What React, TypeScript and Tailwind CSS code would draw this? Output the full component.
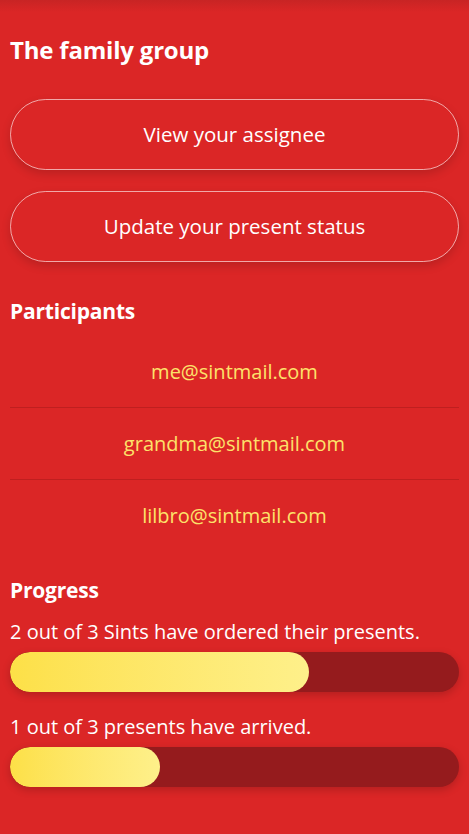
import React from "react";

const font = { fontFamily: '"Open Sans", "Noto Sans", sans-serif' };

function Bar({ pct }: { pct: number }) {
  return (
    <div className="h-10 w-full rounded-full bg-[#951b1d] shadow-[0_3px_8px_rgba(0,0,0,0.18)] overflow-hidden">
      <div
        className="h-full rounded-full bg-gradient-to-r from-[#fde047] to-[#fef08a]"
        style={{ width: `${pct}%` }}
      />
    </div>
  );
}

export default function App() {
  const emails = ["me@sintmail.com", "grandma@sintmail.com", "lilbro@sintmail.com"];
  return (
    <div
      className="min-h-[834px] w-full bg-[#db2626] text-white px-[10px] relative"
      style={font}
    >
      <div className="absolute left-0 right-0 top-0 h-3 bg-gradient-to-b from-[#c82424] to-[#db2626]" />
      <div className="relative">
        <h1 className="pt-[34px] text-[24px] font-bold leading-8 tracking-[-0.2px]">The family group</h1>
        <div className="mt-[33px] flex flex-col gap-[21px]">
          <button className="h-[71px] w-full rounded-full border border-white/60 text-[20.5px] shadow-[0_4px_10px_rgba(0,0,0,0.15)]">
            View your assignee
          </button>
          <button className="h-[71px] w-full rounded-full border border-white/60 text-[20.5px] shadow-[0_4px_10px_rgba(0,0,0,0.15)]">
            Update your present status
          </button>
        </div>
        <h2 className="mt-[35px] text-[21px] font-bold leading-7 tracking-[-0.2px]">Participants</h2>
        <div className="mt-[11px]">
          {emails.map((e, i) => (
            <div
              key={e}
              className={`h-[72px] flex items-center justify-center text-[20px] text-[#fde26a] ${
                i < emails.length - 1 ? "border-b border-[#bf1f1f]" : ""
              }`}
            >
              {e}
            </div>
          ))}
        </div>
        <h2 className="mt-[24px] text-[21px] font-bold leading-7 tracking-[-0.2px]">Progress</h2>
        <p className="mt-[16px] text-[20px] leading-6">2 out of 3 Sints have ordered their presents.</p>
        <div className="mt-[8px]">
          <Bar pct={66.67} />
        </div>
        <p className="mt-[23px] text-[20px] leading-6">1 out of 3 presents have arrived.</p>
        <div className="mt-[8px]">
          <Bar pct={33.4} />
        </div>
      </div>
    </div>
  );
}
